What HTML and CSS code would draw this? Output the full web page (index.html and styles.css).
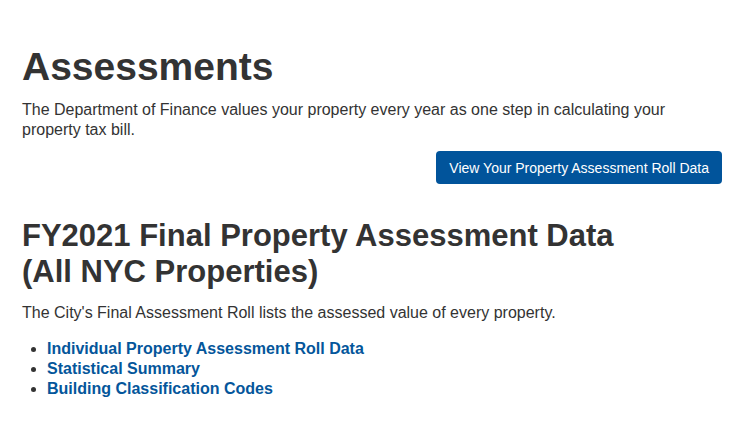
FILE: index.html
```html
<!DOCTYPE html>
<html lang="en">
<head>
<meta charset="utf-8">
<title>Assessments</title>
<link rel="stylesheet" href="styles.css">
</head>
<body>
<main class="page">
  <h1 class="title">Assessments</h1>
  <p class="intro">The Department of Finance values your property every year as one step in calculating your property tax bill.</p>
  <div class="actions">
    <a class="btn" href="#">View Your Property Assessment Roll Data</a>
  </div>
  <h2 class="subtitle">FY2021 Final Property Assessment Data<br>(All NYC Properties)</h2>
  <p class="lead">The City's Final Assessment Roll lists the assessed value of every property.</p>
  <ul class="links">
    <li><a href="#">Individual Property Assessment Roll Data</a></li>
    <li><a href="#">Statistical Summary</a></li>
    <li><a href="#">Building Classification Codes</a></li>
  </ul>
</main>
</body>
</html>
```
FILE: styles.css
```css
html, body {
  margin: 0;
  padding: 0;
  background: #ffffff;
}
body {
  font-family: "Liberation Sans", Arial, sans-serif;
  color: #333333;
}
.page {
  padding: 45px 21px 0 22px;
}
.title {
  margin: 0 0 11px;
  font-size: 39px;
  line-height: 44px;
  font-weight: bold;
  color: #333333;
}
.intro {
  margin: 0;
  font-size: 16px;
  line-height: 20px;
}
.actions {
  display: flex;
  justify-content: flex-end;
  margin-top: 11px;
}
.btn {
  display: inline-block;
  background: #01549b;
  color: #ffffff;
  font-size: 14px;
  line-height: 20px;
  padding: 7px 13px 6px;
  border-radius: 4px;
  text-decoration: none;
}
.subtitle {
  margin: 34px 0 0;
  font-size: 31px;
  line-height: 36px;
  font-weight: bold;
  color: #333333;
}
.lead {
  margin: 13px 0 0;
  font-size: 16px;
  line-height: 20px;
}
.links {
  margin: 16px 0 0;
  padding-left: 25px;
  font-size: 16px;
  line-height: 20px;
}
.links a {
  color: #04569b;
  font-weight: bold;
  text-decoration: none;
}
```
